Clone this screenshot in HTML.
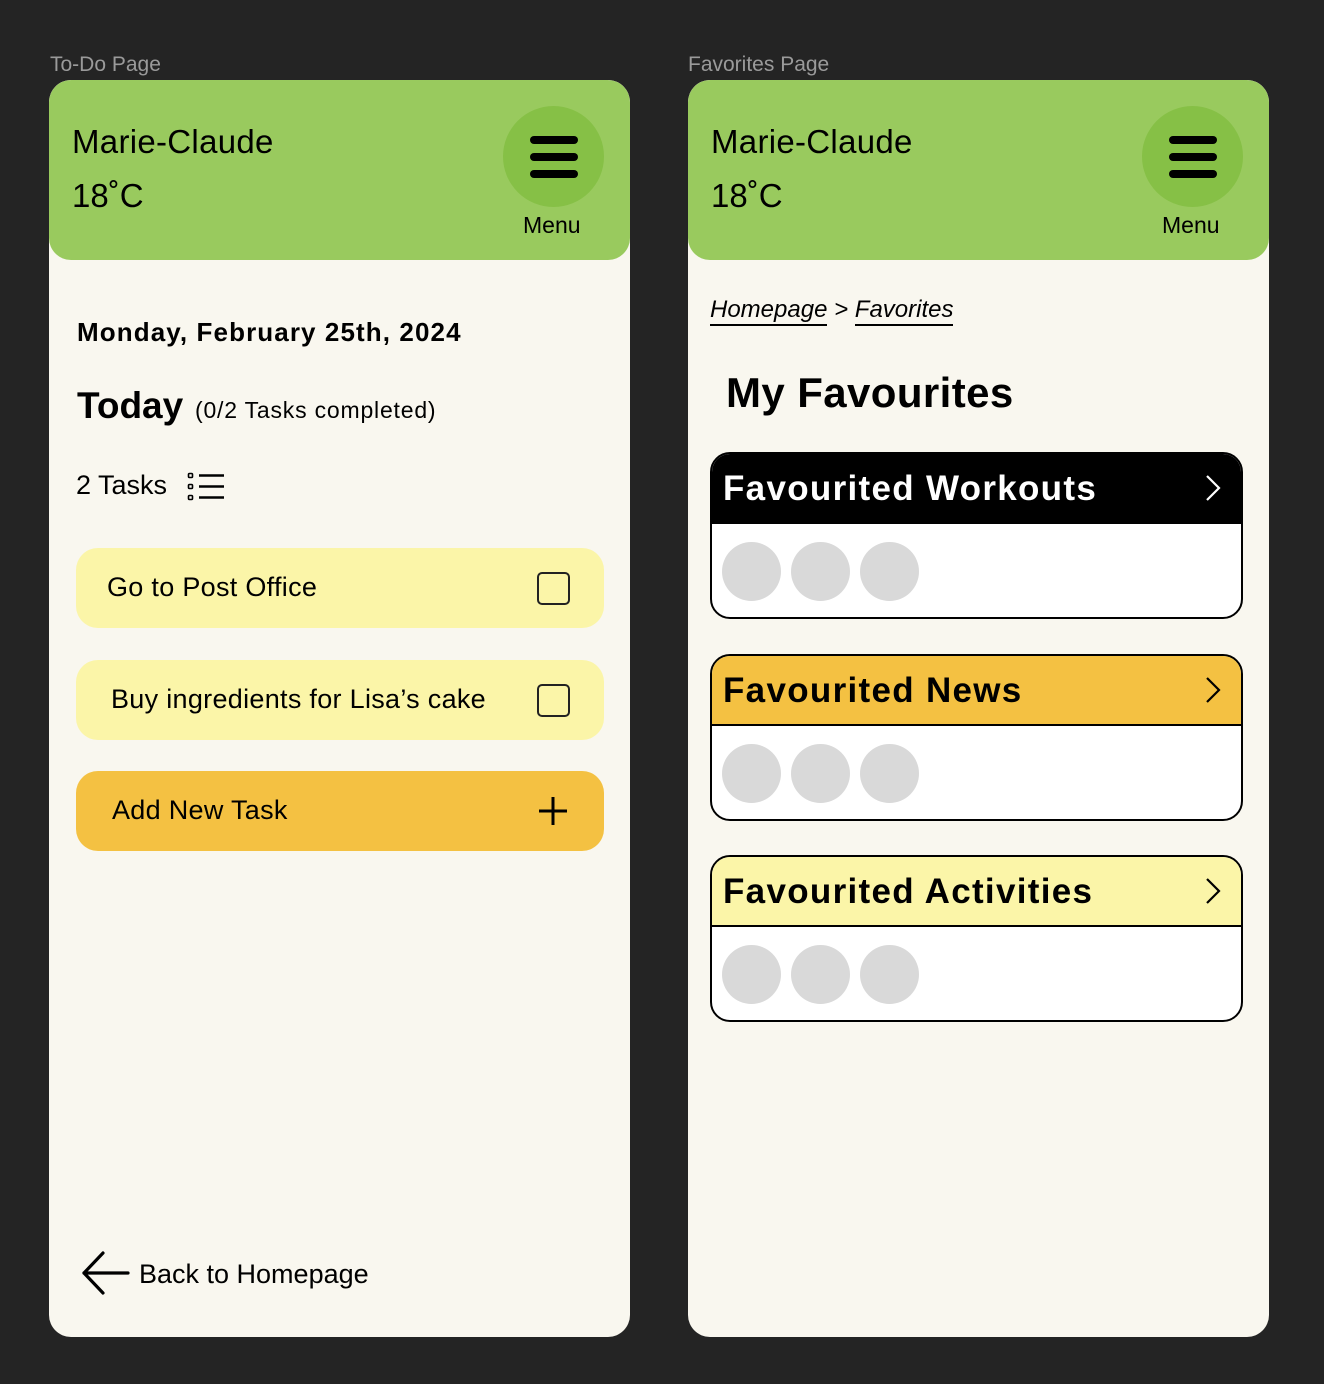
<!DOCTYPE html>
<html><head><meta charset="utf-8"><style>
*{margin:0;padding:0;box-sizing:border-box}
body{width:1324px;height:1384px;background:#242424;font-family:"Liberation Sans",sans-serif;position:relative;overflow:hidden;color:#000}
.a{position:absolute;white-space:nowrap}
.lbl{color:#9a9a9a;font-size:21px}
.panel{position:absolute;top:80px;width:581px;height:1257px;background:#f9f7ef;border-radius:22px;overflow:hidden}
.hdr{position:absolute;left:0;top:0;width:581px;height:180px;background:#99ca5e;border-radius:22px}
.name{left:23px;top:43px;font-size:33px;letter-spacing:0.3px}
.temp{left:23px;top:97px;font-size:33px}
.circ{position:absolute;left:454px;top:26px;width:101px;height:101px;border-radius:50%;background:#86c046}
.bar{position:absolute;left:27px;width:48px;height:8px;border-radius:4px;background:#000}
.menu{left:474px;top:132px;font-size:23px}
.task{position:absolute;left:27px;width:528px;height:80px;border-radius:22px;background:#fbf5a8}
.task span{position:absolute;top:24px;font-size:27px;white-space:nowrap;letter-spacing:0.3px}
.cb{position:absolute;left:461px;top:24px;width:33px;height:33px;border:2px solid #222;border-radius:5px}
.card{position:absolute;left:22px;width:533px;height:167px;border:2px solid #000;border-radius:20px;background:#fff;overflow:hidden}
.ch{position:absolute;left:0;top:0;width:100%;height:70px;border-bottom:2px solid #000}
.ch span{position:absolute;left:11px;top:15px;font-size:35px;font-weight:bold;white-space:nowrap;letter-spacing:1.3px}
.ch svg{position:absolute;right:20px;top:20px}
.dot{position:absolute;top:88px;width:59px;height:59px;border-radius:50%;background:#d9d9d9}
</style></head><body>
<div class="a lbl" style="left:50px;top:53px">To-Do Page</div>
<div class="a lbl" style="left:688px;top:53px">Favorites Page</div>

<div class="panel" style="left:49px">
 <div class="hdr">
  <div class="a name">Marie-Claude</div>
  <div class="a temp">18˚C</div>
  <div class="circ"><div class="bar" style="top:30px"></div><div class="bar" style="top:47px"></div><div class="bar" style="top:64px"></div></div>
  <div class="a menu">Menu</div>
 </div>
 <div class="a" style="left:28px;top:237px;font-size:26px;font-weight:bold;letter-spacing:1.1px">Monday, February 25th, 2024</div>
 <div class="a" style="left:28px;top:305px;font-size:37px;font-weight:bold">Today</div>
 <div class="a" style="left:146px;top:317px;font-size:23px;letter-spacing:0.8px">(0/2 Tasks completed)</div>
 <div class="a" style="left:27px;top:390px;font-size:27px">2 Tasks</div>
 <svg class="a" style="left:138px;top:392px" width="38" height="30" viewBox="0 0 38 30">
  <g fill="none" stroke="#000" stroke-width="1.6"><rect x="1.5" y="1.5" width="4" height="4" rx="1"/><rect x="1.5" y="12.5" width="4" height="4" rx="1"/><rect x="1.5" y="23.5" width="4" height="4" rx="1"/></g>
  <g stroke="#000" stroke-width="2.6"><line x1="12" y1="3.5" x2="37" y2="3.5"/><line x1="12" y1="14.5" x2="37" y2="14.5"/><line x1="12" y1="25.5" x2="37" y2="25.5"/></g>
 </svg>
 <div class="task" style="top:468px"><span style="left:31px">Go to Post Office</span><div class="cb"></div></div>
 <div class="task" style="top:580px"><span style="left:35px">Buy ingredients for Lisa’s cake</span><div class="cb"></div></div>
 <div class="task" style="top:691px;background:#f4c142"><span style="left:36px">Add New Task</span>
  <svg style="position:absolute;left:461px;top:24px" width="32" height="32"><g stroke="#000" stroke-width="3"><line x1="16" y1="2" x2="16" y2="30"/><line x1="2" y1="16" x2="30" y2="16"/></g></svg></div>
 <svg class="a" style="left:33px;top:1171px" width="48" height="44" viewBox="0 0 48 44"><g fill="none" stroke="#000" stroke-width="3.2" stroke-linecap="round" stroke-linejoin="round"><path d="M21 2 L2 22 L21 42"/><path d="M2 22 H46"/></g></svg>
 <div class="a" style="left:90px;top:1179px;font-size:27px">Back to Homepage</div>
</div>

<div class="panel" style="left:688px">
 <div class="hdr">
  <div class="a name">Marie-Claude</div>
  <div class="a temp">18˚C</div>
  <div class="circ"><div class="bar" style="top:30px"></div><div class="bar" style="top:47px"></div><div class="bar" style="top:64px"></div></div>
  <div class="a menu">Menu</div>
 </div>
 <div class="a" style="left:22px;top:216px;font-size:24px;font-style:italic"><span style="border-bottom:2px solid #000;padding-bottom:1px">Homepage</span> &gt; <span style="border-bottom:2px solid #000;padding-bottom:1px">Favorites</span></div>
 <div class="a" style="left:38px;top:289px;font-size:42px;font-weight:bold;letter-spacing:0.4px">My Favourites</div>
 <div class="card" style="top:372px"><div class="ch" style="background:#000;color:#fff"><span>Favourited Workouts</span><svg width="16" height="28"><path d="M2 2 L14 14 L2 26" fill="none" stroke="#fff" stroke-width="2.2"/></svg></div>
  <div class="dot" style="left:10px"></div><div class="dot" style="left:79px"></div><div class="dot" style="left:148px"></div></div>
 <div class="card" style="top:574px"><div class="ch" style="background:#f4c142"><span>Favourited News</span><svg width="16" height="28"><path d="M2 2 L14 14 L2 26" fill="none" stroke="#000" stroke-width="2.2"/></svg></div>
  <div class="dot" style="left:10px"></div><div class="dot" style="left:79px"></div><div class="dot" style="left:148px"></div></div>
 <div class="card" style="top:775px"><div class="ch" style="background:#fbf5a8"><span>Favourited Activities</span><svg width="16" height="28"><path d="M2 2 L14 14 L2 26" fill="none" stroke="#000" stroke-width="2.2"/></svg></div>
  <div class="dot" style="left:10px"></div><div class="dot" style="left:79px"></div><div class="dot" style="left:148px"></div></div>
</div>
</body></html>
